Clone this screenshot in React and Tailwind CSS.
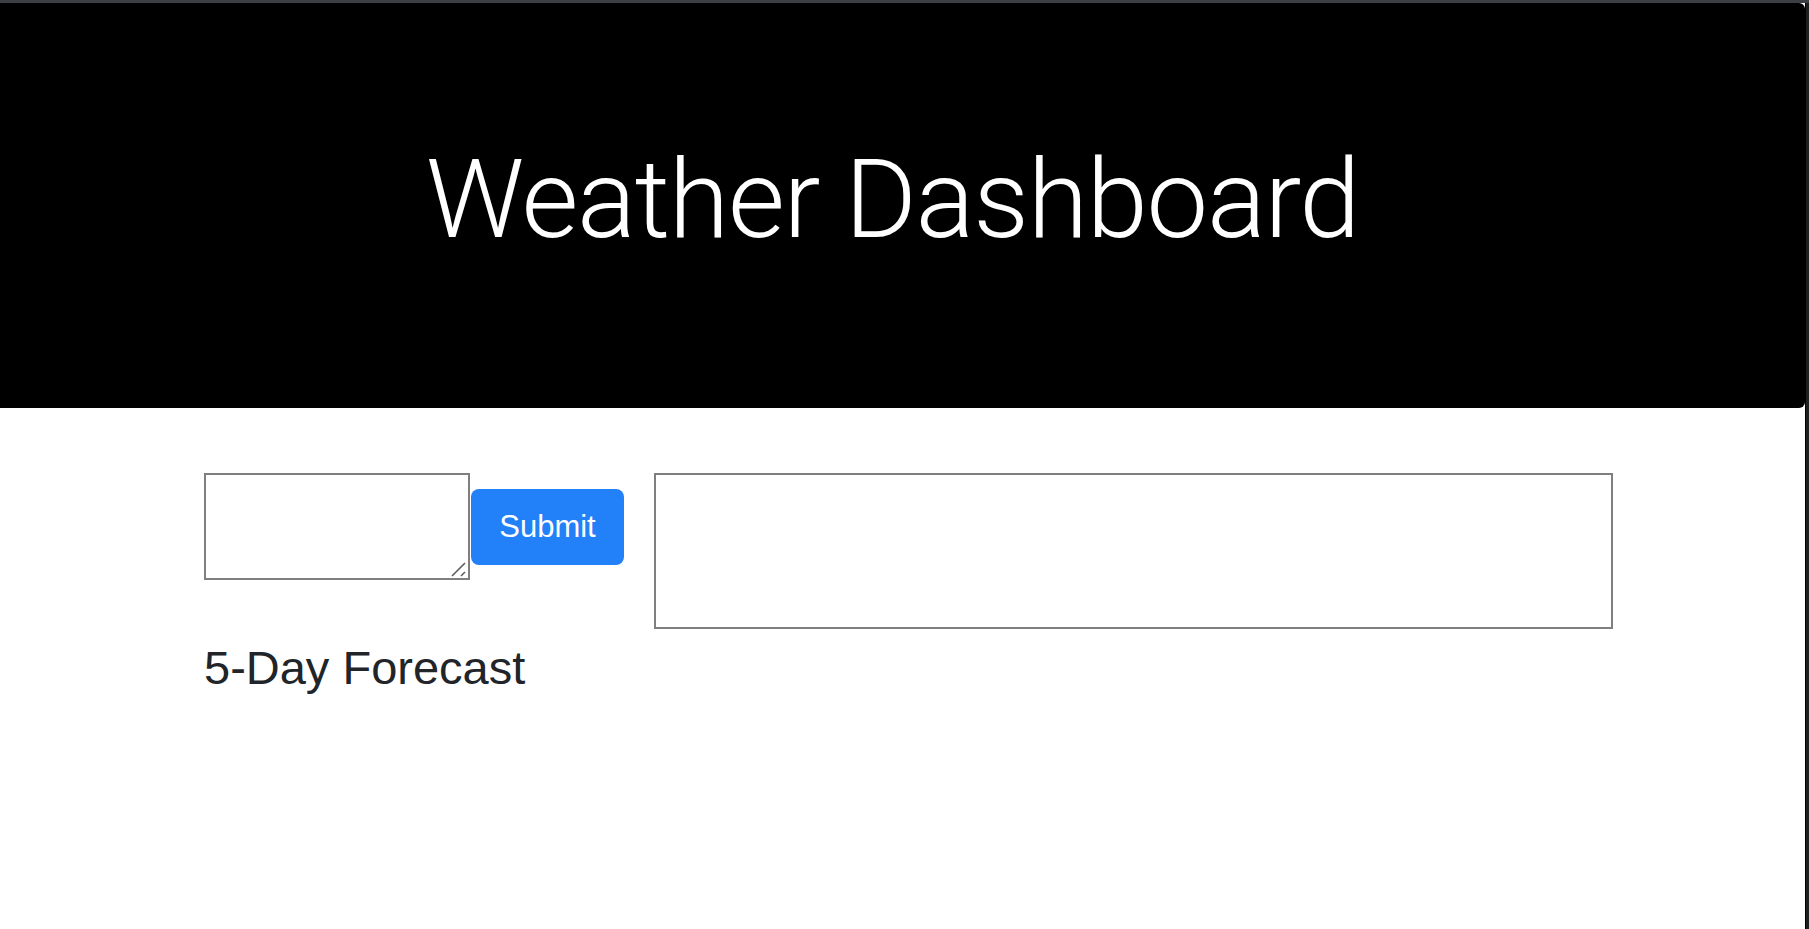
import React, { useState } from 'react';

export default function App() {
  const [city, setCity] = useState('');

  return (
    <div className="flex h-[929px] w-full flex-col overflow-hidden bg-white font-['Liberation_Sans',Arial,sans-serif]">
      <div className="h-[3px] w-full shrink-0 bg-[#3c3f43]" />
      <div className="flex min-h-0 flex-1">
        <main className="flex min-w-0 flex-1 flex-col">
          <header className="flex h-[405px] shrink-0 items-center justify-center rounded-r-[6px] bg-black pb-[12px] pr-[20px]">
            <h1 className="font-['Roboto',sans-serif] text-[110px] font-light leading-[1.2] tracking-[-1.3px] text-white">
              Weather Dashboard
            </h1>
          </header>

          <section className="flex flex-col pl-[204px] pt-[65px]">
            <div className="flex items-start gap-[30px]">
              <div className="flex items-center">
                <div className="relative">
                  <textarea
                    value={city}
                    onChange={(e) => setCity(e.target.value)}
                    className="block h-[107px] w-[266px] resize-none border-2 border-[#7f7f7f] bg-white outline-none"
                  />
                  <svg
                    className="pointer-events-none absolute bottom-[3px] right-[3px]"
                    width="16"
                    height="16"
                    viewBox="0 0 16 16"
                  >
                    <path d="M1 15L14 2M10 15L14 11" stroke="#5f5f5f" strokeWidth="1.6" fill="none" />
                  </svg>
                </div>
                <button
                  type="button"
                  className="ml-[1px] h-[76px] w-[153px] rounded-[8px] bg-[#2280f8] pt-[2px] text-[31px] text-white"
                >
                  Submit
                </button>
              </div>
              <div className="h-[156px] w-[959px] border-2 border-[#7f7f7f]" />
            </div>
            <h4 className="mt-[11px] text-[47px] leading-[1.2] text-[#212529]">5-Day Forecast</h4>
          </section>
        </main>
        <div className="w-[4px] shrink-0 border-l border-black bg-[#1e1f21]" />
      </div>
    </div>
  );
}
